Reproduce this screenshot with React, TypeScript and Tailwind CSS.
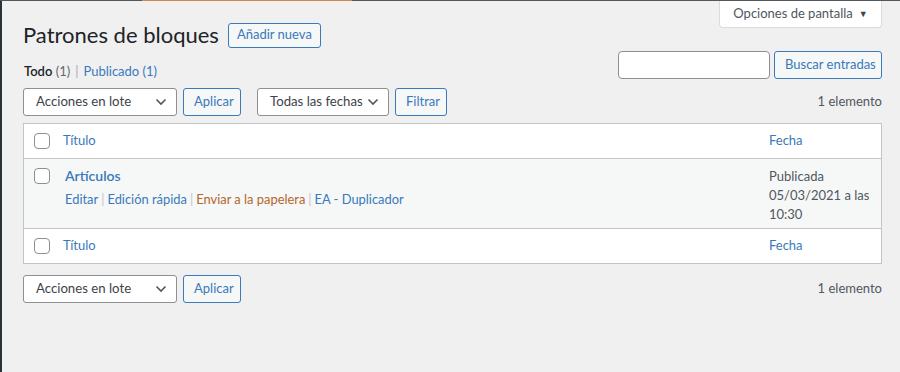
import React from "react";

const font = { fontFamily: '"Segoe UI", Lato, "Liberation Sans", sans-serif' };

function Checkbox() {
  return <span className="block w-4 h-4 rounded-[4px] border border-[#8c8f94] bg-white shrink-0" />;
}

function Select({ label, width }: { label: string; width: string }) {
  return (
    <div
      className={`${width} h-[28px] flex items-center justify-between pl-[12px] pr-[9px] bg-white border border-[#8c8f94] rounded-[3px] text-[13.2px] text-[#3c434a] whitespace-nowrap`}
    >
      <span>{label}</span>
      <svg width="12" height="8" viewBox="0 0 12 8" fill="none">
        <path d="M1.5 1.5l4.5 4.5 4.5-4.5" stroke="#50575e" strokeWidth="1.6" />
      </svg>
    </div>
  );
}

function Button({ label, className = "" }: { label: string; className?: string }) {
  return (
    <button
      className={`h-[28px] px-[10px] bg-[#f6f7f7] border border-[#3a79bb] rounded-[3px] text-[13px] text-[#3a79bb] whitespace-nowrap ${className}`}
    >
      {label}
    </button>
  );
}

function BulkNav({ withFilter }: { withFilter?: boolean }) {
  return (
    <div className="flex items-center justify-between">
      <div className="flex items-center">
        <Select label="Acciones en lote" width="w-[154px]" />
        <Button label="Aplicar" className="ml-[6px] w-[58px]" />
        {withFilter && (
          <>
            <Select label="Todas las fechas" width="w-[132px] ml-[16px]" />
            <Button label="Filtrar" className="ml-[6px] w-[52px] px-0" />
          </>
        )}
      </div>
      <span className="text-[13px] text-[#50575e]">1 elemento</span>
    </div>
  );
}

export default function App() {
  const sep = <span className="text-[#c3c4c7] px-[3px]">|</span>;

  return (
    <div className="w-full h-[372px] bg-[#f0f0f1] flex flex-col overflow-hidden" style={font}>
      {/* top line */}
      <div className="flex h-px shrink-0">
        <div className="w-[142px] bg-[#50575e]" />
        <div className="w-[210px] bg-[#d4874a]" />
        <div className="flex-1 bg-[#50575e]" />
      </div>

      <div className="flex flex-1">
        <div className="w-[2px] bg-[#2c3338] shrink-0" />

        <div className="flex-1 pl-[21px] pr-[18px] text-[#1d2327]">
          {/* title row */}
          <div className="flex justify-between items-start h-[46px]">
            <div className="flex items-center pt-[21px]">
              <h1 className="text-[22px] leading-[26px] font-normal text-[#1d2327]">Patrones de bloques</h1>
              <button className="ml-[9px] h-[25px] w-[93px] bg-[#f6f7f7] border border-[#3a79bb] rounded-[3px] text-[13px] text-[#3a79bb] whitespace-nowrap">
                Añadir nueva
              </button>
            </div>
            <div className="w-[163px] h-[27px] bg-white border border-t-0 border-[#dcdcde] rounded-b-[4px] flex items-center justify-center gap-[6px] text-[13px] text-[#50575e]">
              <span>Opciones de pantalla</span>
              <span className="text-[9px] text-[#3c434a]">▼</span>
            </div>
          </div>

          {/* status + search */}
          <div className="flex justify-between items-start h-[41px]">
            <div className="pt-[14px] text-[13px] leading-[20px] pl-[1px]">
              <span className="font-semibold text-[#1d2327]">Todo</span>{" "}
              <span className="text-[#646970]">(1)</span>
              <span className="text-[#a7aaad] px-[5px]">|</span>
              <span className="text-[#3a79bb]">Publicado</span>{" "}
              <span className="text-[#3a79bb]">(1)</span>
            </div>
            <div className="flex items-center gap-[4px] pt-[4px]">
              <div className="w-[152px] h-[28px] bg-white border border-[#8c8f94] rounded-[4px]" />
              <Button label="Buscar entradas" className="w-[108px] px-0" />
            </div>
          </div>

          {/* top tablenav */}
          <div className="h-[35px]">
            <BulkNav withFilter />
          </div>

          {/* table */}
          <div className="bg-white border border-[#c3c4c7]">
            <div className="flex items-center h-[35px] border-b border-[#c3c4c7] text-[13px] text-[#3a79bb]">
              <div className="w-[39px] pl-[10px]">
                <Checkbox />
              </div>
              <div className="flex-1">Título</div>
              <div className="w-[112px]">Fecha</div>
            </div>

            <div className="flex h-[70px] bg-[#f6f7f7] border-b border-[#c3c4c7]">
              <div className="w-[39px] pl-[10px] pt-[9px]">
                <Checkbox />
              </div>
              <div className="flex-1 pt-[8px] pl-[2px]">
                <div className="text-[14px] leading-[18px] font-semibold text-[#3a79bb]">Artículos</div>
                <div className="text-[12.9px] leading-[18px] mt-[5px] flex">
                  <span className="text-[#3a79bb]">Editar</span>
                  {sep}
                  <span className="text-[#3a79bb]">Edición rápida</span>
                  {sep}
                  <span className="text-[#b4662c]">Enviar a la papelera</span>
                  {sep}
                  <span className="text-[#3a79bb]">EA - Duplicador</span>
                </div>
              </div>
              <div className="w-[112px] pt-[8px] text-[13px] leading-[19px] text-[#50575e]">
                <div>Publicada</div>
                <div>05/03/2021 a las</div>
                <div>10:30</div>
              </div>
            </div>

            <div className="flex items-center h-[34px] text-[13px] text-[#3a79bb]">
              <div className="w-[39px] pl-[10px]">
                <Checkbox />
              </div>
              <div className="flex-1">Título</div>
              <div className="w-[112px]">Fecha</div>
            </div>
          </div>

          {/* bottom tablenav */}
          <div className="mt-[11px]">
            <BulkNav />
          </div>
        </div>
      </div>
    </div>
  );
}
